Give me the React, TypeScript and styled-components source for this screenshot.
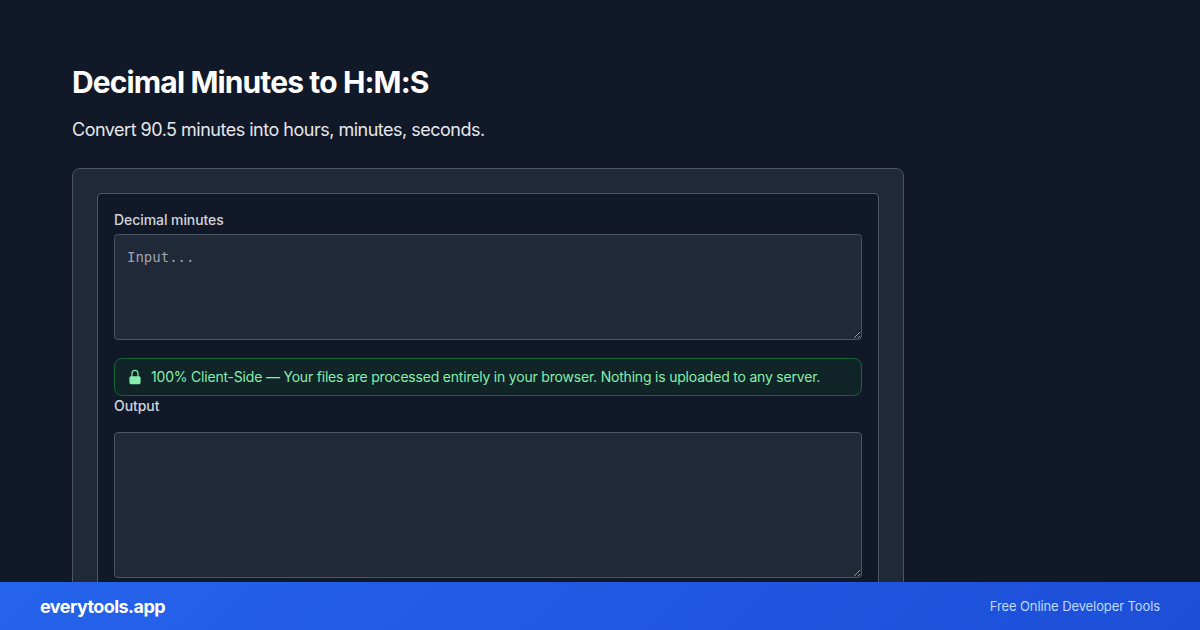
import { createGlobalStyle } from "styled-components";
import styled from "styled-components";

const GlobalStyle = createGlobalStyle`
  * {
    box-sizing: border-box;
  }
  html,
  body {
    margin: 0;
    height: 630px;
    overflow: hidden;
    background: #111827;
    font-family: Inter, "Liberation Sans", sans-serif;
  }
`;

const App = () => {
  return (
    <>
      <GlobalStyle />
      <StPage>
        <StTitle>Decimal Minutes to H:M:S</StTitle>
        <StSubtitle>Convert 90.5 minutes into hours, minutes, seconds.</StSubtitle>
        <StCard>
          <StTool>
            <StLabel htmlFor="input">Decimal minutes</StLabel>
            <StTextarea id="input" $height={106} placeholder="Input..." />
            <StNotice>
              <StLock viewBox="0 0 20 20" aria-hidden="true">
                <path
                  fillRule="evenodd"
                  clipRule="evenodd"
                  d="M10 1a4.5 4.5 0 0 0-4.5 4.5V9H5a2 2 0 0 0-2 2v6a2 2 0 0 0 2 2h10a2 2 0 0 0 2-2v-6a2 2 0 0 0-2-2h-.5V5.5A4.5 4.5 0 0 0 10 1Zm3 8V5.5a3 3 0 1 0-6 0V9h6Z"
                />
              </StLock>
              100% Client-Side — Your files are processed entirely in your browser. Nothing is
              uploaded to any server.
            </StNotice>
            <StLabel htmlFor="output" $gap={16}>
              Output
            </StLabel>
            <StTextarea id="output" $height={146} readOnly />
          </StTool>
        </StCard>
      </StPage>
      <StFooter>
        <StBrand>everytools.app</StBrand>
        <StTagline>Free Online Developer Tools</StTagline>
      </StFooter>
    </>
  );
};

export default App;

const StPage = styled.main`
  width: 904px;
  height: 630px;
  overflow: hidden;
  padding: 64px 0 0 72px;
`;
const StTitle = styled.h1`
  margin: 0 0 16px;
  font-size: 30px;
  line-height: 36px;
  font-weight: 700;
  letter-spacing: -0.87px;
  color: #ffffff;
`;
const StSubtitle = styled.p`
  margin: 0 0 24px;
  font-size: 18px;
  line-height: 28px;
  letter-spacing: -0.5px;
  color: #e5e7eb;
`;
const StCard = styled.section`
  padding: 24px;
  height: 600px;
  background: #1f2937;
  border: 1px solid #4b5563;
  border-radius: 8px;
`;
const StTool = styled.div`
  display: flex;
  flex-direction: column;
  padding: 16px;
  background: #111827;
  border: 1px solid #4b5563;
  border-radius: 4px;
`;
const StLabel = styled.label<{ $gap?: number }>`
  margin-bottom: ${({ $gap }) => $gap ?? 4}px;
  font-size: 14px;
  line-height: 20px;
  font-weight: 500;
  letter-spacing: -0.07px;
  color: #d1d5db;
`;
const StTextarea = styled.textarea<{ $height: number }>`
  display: block;
  width: 100%;
  height: ${({ $height }) => $height}px;
  padding: 12px;
  background: #1f2937;
  border: 1px solid #4b5563;
  border-radius: 4px;
  outline: none;
  resize: vertical;
  color: #e5e7eb;
  font-family: "DejaVu Sans Mono", "Liberation Mono", monospace;
  font-size: 14px;
  line-height: 20px;

  &::placeholder {
    color: #9ca3af;
    opacity: 1;
  }
`;
const StNotice = styled.div`
  display: flex;
  align-items: center;
  gap: 8px;
  height: 38px;
  margin-top: 18px;
  padding: 0 12px;
  background: rgba(20, 83, 45, 0.2);
  border: 1px solid #166534;
  border-radius: 8px;
  font-size: 14px;
  line-height: 20px;
  letter-spacing: -0.2px;
  color: #86efac;
`;
const StLock = styled.svg`
  flex: none;
  width: 16px;
  height: 16px;
  fill: #86efac;
`;
const StFooter = styled.footer`
  position: fixed;
  left: 0;
  right: 0;
  bottom: 0;
  display: flex;
  justify-content: space-between;
  align-items: center;
  height: 48px;
  padding: 0 40px;
  background: linear-gradient(135deg, #2563eb, #1d4ed8);
`;
const StBrand = styled.span`
  font-size: 18px;
  font-weight: 700;
  letter-spacing: -0.57px;
  color: #ffffff;
`;
const StTagline = styled.span`
  font-size: 13px;
  letter-spacing: -0.1px;
  color: #bfdbfe;
`;
